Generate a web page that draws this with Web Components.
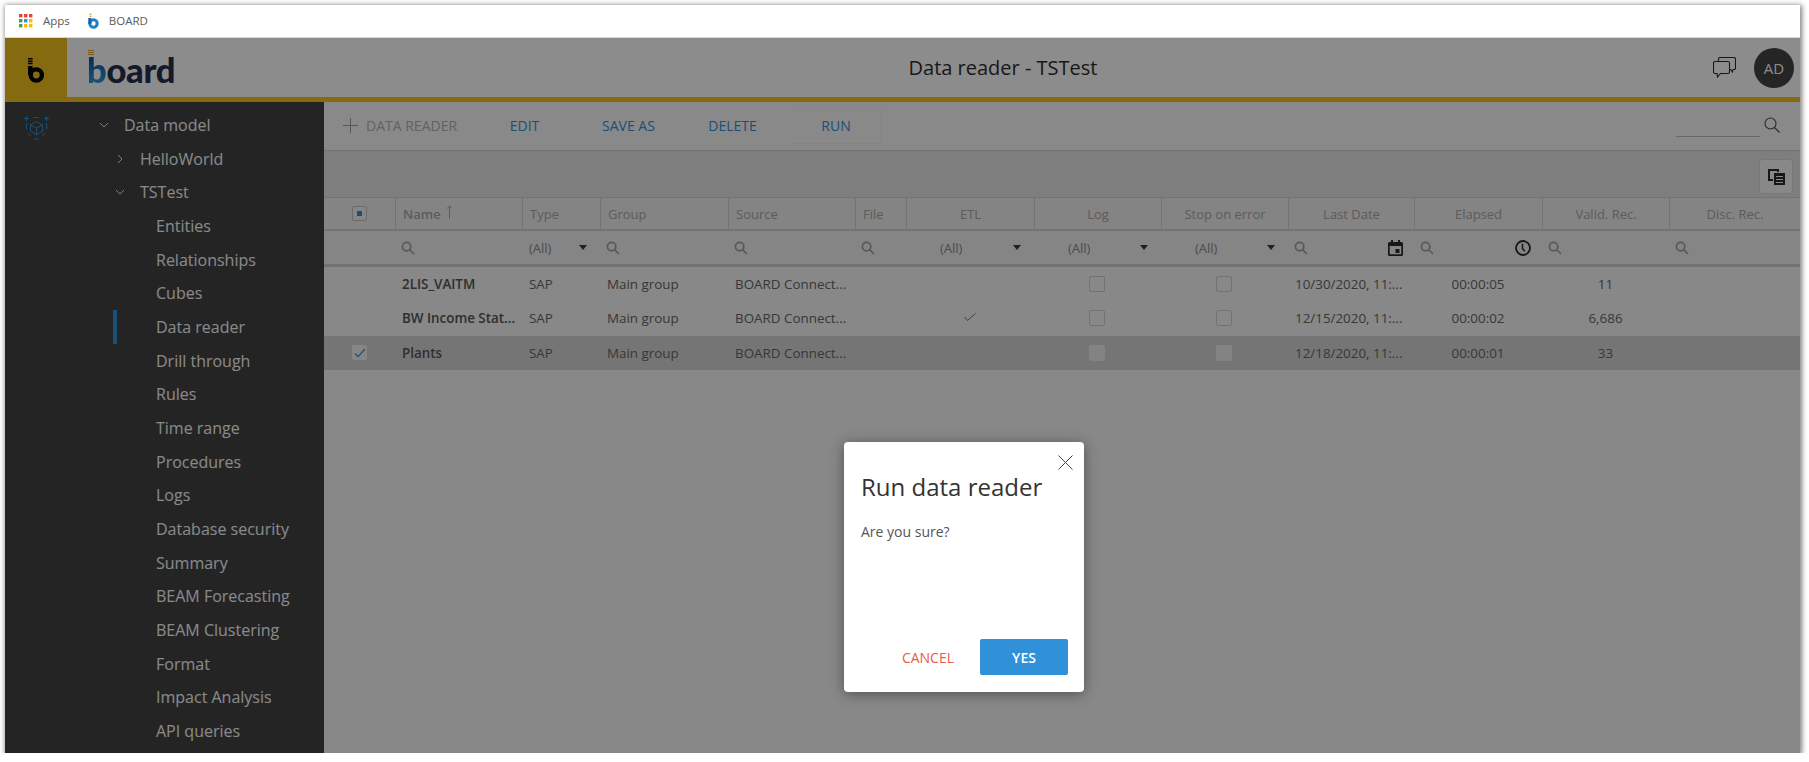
<!DOCTYPE html>
<html lang="en">
<head>
<meta charset="utf-8">
<title>Data reader - TSTest</title>
<style>
  html, body { margin: 0; padding: 0; background: #fff; overflow: hidden; }
  body { font-family: "Open Sans", "Liberation Sans", sans-serif; }
</style>
</head>
<body>
<board-app></board-app>

<script>
// small icons used in several places
const ICON_SEARCH = `<svg width="14" height="14" viewBox="0 0 14 14" fill="none" stroke="currentColor" stroke-width="1.7"><circle cx="5.6" cy="5.6" r="4.2"/><path d="M8.8 8.8l4.2 4.2"/></svg>`;
const ICON_CARET = `<svg width="8" height="5" viewBox="0 0 8 5"><path d="M0 0h8L4 5z" fill="currentColor"/></svg>`;
const ICON_CHECK = `<svg width="12" height="10" viewBox="0 0 12 10" fill="none" stroke="currentColor" stroke-width="1.2"><path d="M1 5.5l3 3.2L11 1"/></svg>`;
const ICON_TICK_THIN = `<svg width="12" height="8" viewBox="0 0 12 8" fill="none" stroke="currentColor" stroke-width=".8"><path d="M.5 4l3 3.500L11.500 .5"/></svg>`;
const ICON_CALENDAR = `<svg width="15" height="16" viewBox="0 0 15 16"><path fill="#2b2b2b" d="M3 0h2v2h5V0h2v2h1.500A1.500 1.500 0 0 1 15 3.500v11a1.500 1.500 0 0 1-1.500 1.500h-12A1.500 1.500 0 0 1 0 14.500v-11A1.500 1.500 0 0 1 1.500 2H3zM1.700 6v8.300h11.600V6z"/><rect x="7.500" y="9" width="4" height="4" fill="#2b2b2b"/></svg>`;
const ICON_CLOCK = `<svg width="16" height="16" viewBox="0 0 16 16" fill="none" stroke="#2b2b2b" stroke-width="1.800"><circle cx="8" cy="8" r="7"/><path d="M7.500 3.800v4.600l2.300 2.800" stroke-width="1.500"/></svg>`;

class BoardApp extends HTMLElement {
  constructor() {
    super();
    this.attachShadow({ mode: "open" });
  }
  connectedCallback() {
    this.shadowRoot.innerHTML = `
      <style>
        :host {
          display: flex;
          flex-direction: column;
          width: 1795px;
          height: 748px;
          margin: 5px 0 0 5px;
          background: #fff;
          box-shadow: 1px 1px 5px 1px rgba(0,0,0,.5);
          font-family: "Open Sans", "Liberation Sans", sans-serif;
        }
        .screen { position: relative; flex: 1; display: flex; flex-direction: column; min-height: 0; overflow: hidden; }
        .main { flex: 1; display: flex; min-height: 0; }
        .work { flex: 1; display: flex; flex-direction: column; background: #f7f7f7; min-width: 0; }
        .backdrop { position: absolute; inset: 0; background: rgba(0,0,0,.45); }
      </style>
      <bookmark-bar></bookmark-bar>
      <div class="screen">
        <board-header></board-header>
        <div class="main">
          <board-sidebar>
            <nav-item level="0" chevron="down">Data model</nav-item>
            <nav-item level="1" chevron="right">HelloWorld</nav-item>
            <nav-item level="1" chevron="down">TSTest</nav-item>
            <nav-item level="2">Entities</nav-item>
            <nav-item level="2">Relationships</nav-item>
            <nav-item level="2">Cubes</nav-item>
            <nav-item level="2" active>Data reader</nav-item>
            <nav-item level="2">Drill through</nav-item>
            <nav-item level="2">Rules</nav-item>
            <nav-item level="2">Time range</nav-item>
            <nav-item level="2">Procedures</nav-item>
            <nav-item level="2">Logs</nav-item>
            <nav-item level="2">Database security</nav-item>
            <nav-item level="2">Summary</nav-item>
            <nav-item level="2">BEAM Forecasting</nav-item>
            <nav-item level="2">BEAM Clustering</nav-item>
            <nav-item level="2">Format</nav-item>
            <nav-item level="2">Impact Analysis</nav-item>
            <nav-item level="2">API queries</nav-item>
          </board-sidebar>
          <div class="work">
            <data-toolbar></data-toolbar>
            <data-band></data-band>
            <data-grid></data-grid>
          </div>
        </div>
        <div class="backdrop"></div>
        <confirm-dialog heading="Run data reader">Are you sure?</confirm-dialog>
      </div>
    `;
  }
}

class BookmarkBar extends HTMLElement {
  constructor() {
    super();
    this.attachShadow({ mode: "open" });
  }
  connectedCallback() {
    const colors = ["#ea4335","#ea4335","#ea4335","#34a853","#4285f4","#fbbc05","#34a853","#fbbc05","#fbbc05"];
    const dots = colors.map((c, i) =>
      `<rect x="${(i % 3) * 5}" y="${Math.floor(i / 3) * 5}" width="3.400" height="3.400" fill="${c}"/>`).join("");
    this.shadowRoot.innerHTML = `
      <style>
        :host {
          display: flex;
          align-items: center;
          height: 33px;
          box-sizing: border-box;
          padding: 0 0 1px 14px;
          background: #fff;
          border-bottom: 1px solid #d8d8d8;
          font-size: 11.500px;
          color: #5a5a5a;
          flex: none;
        }
        svg { display: block; }
        .apps { margin-right: 10px; }
        .fav { margin: 0 10px 0 18px; }
      </style>
      <svg class="apps" width="14" height="14" viewBox="0 0 14 14">${dots}</svg>
      <span>Apps</span>
      <svg class="fav" width="11" height="16" viewBox="0 0 11 16" fill="none">
        <path d="M1.500 0h2M1.500 1.700h2M1.500 3.400h2" stroke="#e0a030" stroke-width="1"/>
        <circle cx="5.500" cy="10.500" r="3.700" stroke="#1e7fd0" stroke-width="3"/>
        <path d="M1.800 5v6" stroke="#1a5fb0" stroke-width="3"/>
      </svg>
      <span>BOARD</span>
    `;
  }
}

class BoardHeader extends HTMLElement {
  constructor() {
    super();
    this.attachShadow({ mode: "open" });
  }
  connectedCallback() {
    this.shadowRoot.innerHTML = `
      <style>
        :host {
          display: flex;
          align-items: center;
          height: 64px;
          box-sizing: border-box;
          background: #fff;
          border-bottom: 5px solid #f2c11d;
          flex: none;
        }
        .square {
          width: 62px;
          height: 64px;
          margin-bottom: -5px;
          background: #f2c11d;
          display: flex;
          align-items: center;
          justify-content: center;
          flex: none;
        }
        .word {
          position: relative;
          margin: 5px 0 0 20px;
          width: 120px;
          font: 900 34.500px/40px Lato, "Open Sans", sans-serif;
          letter-spacing: -.3px;
          color: #26304e;
          flex: none;
        }
        .word b {
          font-weight: inherit;
          background: linear-gradient(180deg, #1a5aa8 30%, #2fb0e0 100%);
          -webkit-background-clip: text;
          background-clip: text;
          color: transparent;
        }
        .ticks { position: absolute; left: 1px; top: 0; width: 6px; height: 6px; background: repeating-linear-gradient(#e0a030 0 1px, transparent 1px 2px); }
        h1 {
          flex: 1;
          margin: 0;
          text-align: center;
          font-size: 20px;
          font-weight: 400;
          color: #2e2e2e;
          padding-left: 86px;
        }
        .chat { margin-right: 18px; flex: none; display: block; }
        .avatar {
          width: 40px;
          height: 40px;
          border-radius: 50%;
          background: #444;
          color: #fdfdfd;
          font-size: 15px;
          display: flex;
          align-items: center;
          justify-content: center;
          margin-right: 6px;
          flex: none;
        }
      </style>
      <div class="square">
        <svg width="16" height="25" viewBox="0 0 16 25" fill="none" stroke="#000">
          <path d="M0 .800h4.600M0 3.200h4.600M0 5.600h4.600" stroke-width="1.500"/>
          <path d="M2.300 8v9" stroke-width="4.600"/>
          <circle cx="8.300" cy="17" r="5.600" stroke-width="4.400"/>
        </svg>
      </div>
      <div class="word"><span class="ticks"></span><b>b</b>oard</div>
      <h1>Data reader - TSTest</h1>
      <svg class="chat" width="23" height="21" viewBox="0 0 23 21" fill="none" stroke="#2b2b2b" stroke-width="1.100">
        <path d="M5.500 4V2a1.500 1.500 0 0 1 1.500-1.500h14A1.500 1.500 0 0 1 22.500 2v9a1.500 1.500 0 0 1-1.500 1.500h-1l-.5 2.500-2-2.500h-1"/>
        <path d="M2 4.500h13A1.500 1.500 0 0 1 16.500 6v9a1.500 1.500 0 0 1-1.500 1.500H7.500l-3 3.500-.5-3.500H2A1.500 1.500 0 0 1 .5 15V6A1.500 1.500 0 0 1 2 4.500z"/>
      </svg>
      <div class="avatar">AD</div>
    `;
  }
}

class BoardSidebar extends HTMLElement {
  constructor() {
    super();
    this.attachShadow({ mode: "open" });
  }
  connectedCallback() {
    this.shadowRoot.innerHTML = `
      <style>
        :host {
          display: flex;
          width: 319px;
          flex: none;
          background: #434343;
          overflow: hidden;
        }
        .rail { width: 95px; flex: none; padding: 13px 0 0 19px; box-sizing: border-box; }
        .tree { flex: 1; padding-top: 6px; }
        svg { display: block; }
      </style>
      <div class="rail">
        <svg width="25" height="25" viewBox="0 0 25 25" fill="none" stroke="#3091d8" stroke-width="1">
          <path d="M12.500 6.500l6 3.400v6.400l-6 3.400-6-3.400V9.900zM6.500 9.900l6 3.300 6-3.300M12.500 13.200v6.400"/>
          <path d="M0 3.500h5M2.500 1v5M20 3.500h5M22.500 1v5M9 2.500h6" />
          <path d="M3 8a11 11 0 0 0-.5 6M22.200 8a11 11 0 0 1 .4 6M4 18l2.500 3M21 18l-2.500 3M10 24h5" />
        </svg>
      </div>
      <div class="tree"><slot></slot></div>
    `;
  }
}

class NavItem extends HTMLElement {
  constructor() {
    super();
    this.attachShadow({ mode: "open" });
  }
  connectedCallback() {
    const level = Number(this.getAttribute("level") || 0);
    const chevron = this.getAttribute("chevron");
    let mark = "";
    if (chevron === "down") mark = `<path d="M0 0l4 4 4-4"/>`;
    if (chevron === "right") mark = `<path d="M2 -2l4 4-4 4"/>`;
    this.shadowRoot.innerHTML = `
      <style>
        :host {
          display: flex;
          align-items: center;
          position: relative;
          height: 33.680px;
          padding-left: ${level * 16}px;
          font-size: 16px;
          color: #fafafa;
          white-space: nowrap;
        }
        :host([active])::before {
          content: "";
          position: absolute;
          left: 13px;
          top: 0;
          width: 4px;
          height: 100%;
          background: #3091d8;
        }
        .chev { width: 24px; flex: none; display: block; }
      </style>
      <svg class="chev" width="24" height="10" viewBox="0 -3 24 10" fill="none" stroke="#e8e8e8" stroke-width="1">${mark}</svg>
      <slot></slot>
    `;
  }
}

class DataToolbar extends HTMLElement {
  constructor() {
    super();
    this.attachShadow({ mode: "open" });
  }
  connectedCallback() {
    this.shadowRoot.innerHTML = `
      <style>
        :host {
          display: flex;
          align-items: center;
          height: 49px;
          box-sizing: border-box;
          padding-bottom: 2px;
          background: #f9f9f9;
          border-bottom: 1px solid #cfcfcf;
          font-size: 14px;
          color: #3091d8;
          flex: none;
        }
        .add { display: flex; align-items: center; gap: 8px; width: 148.500px; padding-left: 19px; box-sizing: border-box; color: #b4b4b4; }
        .btn { width: 104px; text-align: center; }
        .run {
          width: 88px;
          margin-left: 8px;
          height: 37px;
          line-height: 35px;
          box-sizing: border-box;
          text-align: center;
          border: 1px solid #f4f4f4;
          border-left: 0;
          border-bottom-color: #e8f0f6;
        }
        .find { margin-left: auto; display: flex; align-items: flex-start; margin-right: 20px; color: #4a4a4a; }
        .line { width: 84px; height: 21px; border-bottom: 1px solid #bdbdbd; margin-top: 2px; }
        svg { display: block; }
        .glass { margin: 4px 0 0 4px; }
      </style>
      <div class="add">
        <svg width="15" height="15" viewBox="0 0 15 15" stroke="#a0a0a0" stroke-width="1"><path d="M7.500 0v15M0 7.500h15"/></svg>
        <span>DATA READER</span>
      </div>
      <div class="btn">EDIT</div>
      <div class="btn">SAVE AS</div>
      <div class="btn">DELETE</div>
      <div class="run">RUN</div>
      <div class="find">
        <div class="line"></div>
        <svg class="glass" width="16" height="16" viewBox="0 0 16 16" fill="none" stroke="currentColor" stroke-width="1.100"><circle cx="6.500" cy="6.500" r="5.500"/><path d="M10.500 10.500l5 5"/></svg>
      </div>
    `;
  }
}

class DataBand extends HTMLElement {
  constructor() {
    super();
    this.attachShadow({ mode: "open" });
  }
  connectedCallback() {
    this.shadowRoot.innerHTML = `
      <style>
        :host {
          display: flex;
          justify-content: flex-end;
          align-items: center;
          height: 46px;
          box-sizing: border-box;
          padding: 5px 7px 0 0;
          background: #e6e6e6;
          flex: none;
        }
        .panel {
          width: 34px;
          height: 35px;
          box-sizing: border-box;
          background: #f7f7f7;
          border: 1px solid #d9d9d9;
          border-radius: 3px;
          display: flex;
          align-items: center;
          justify-content: center;
        }
      </style>
      <div class="panel">
        <svg width="17" height="16" viewBox="0 0 17 16" fill="#2b2b2b">
          <path d="M0 0h11v3H9V2H2v8h3v2H0z"/>
          <path d="M6 4h11v12H6zM8 7v1h7V7zm0 3v1h7v-1zm0 3v1h7v-1z" fill-rule="evenodd"/>
        </svg>
      </div>
    `;
  }
}

class DataGrid extends HTMLElement {
  constructor() {
    super();
    this.attachShadow({ mode: "open" });
  }
  connectedCallback() {
    const heads = [
      ["", ""], ["Name", "left"], ["Type", "left"], ["Group", "left"], ["Source", "left"], ["File", "left"],
      ["ETL", "mid"], ["Log", "mid"], ["Stop on error", "mid"], ["Last Date", "mid"],
      ["Elapsed", "mid"], ["Valid. Rec.", "mid"], ["Disc. Rec.", "mid"]
    ];
    const rows = [
      { name: "2LIS_VAITM", etl: false, date: "10/30/2020, 11:...", time: "00:00:05", valid: "11" },
      { name: "BW Income Stat...", etl: true, date: "12/15/2020, 11:...", time: "00:00:02", valid: "6,686" },
      { name: "Plants", etl: false, date: "12/18/2020, 11:...", time: "00:00:01", valid: "33", on: true }
    ];
    const search = `<span class="q">${ICON_SEARCH}</span>`;
    const pick = (cls) => `<div class="c pick ${cls}"><span>(All)</span><span class="caret">${ICON_CARET}</span></div>`;
    const headHtml = heads.map(([t, k], i) => {
      if (i === 0) return `<div class="c mid nob"><span class="box master"><i></i></span></div>`;
      const arrow = t === "Name" ? `<svg class="sort" width="7" height="14" viewBox="0 0 7 14" fill="none" stroke="#a8a8a8" stroke-width="1"><path d="M3.500 14V1M1 3.500L3.500 1 6 3.500"/></svg>` : "";
      return `<div class="c ${k}">${t === "Name" ? `<b class="hn">${t}</b>` : t}${arrow}</div>`;
    }).join("");
    const filterHtml = `
      <div class="c"></div>
      <div class="c">${search}</div>${pick("")}
      <div class="c">${search}</div><div class="c">${search}</div><div class="c">${search}</div>
      ${pick("wide")}${pick("wide")}${pick("wide")}
      <div class="c between">${search}${ICON_CALENDAR}</div>
      <div class="c between">${search}${ICON_CLOCK}</div>
      <div class="c">${search}</div><div class="c">${search}</div>`;
    const rowHtml = rows.map(r => `
      <div class="row ${r.on ? "on" : ""}">
        <div class="c mid">${r.on ? `<span class="box tick">${ICON_CHECK}</span>` : ""}</div>
        <div class="c strong">${r.name}</div>
        <div class="c">SAP</div>
        <div class="c">Main group</div>
        <div class="c">BOARD Connect...</div>
        <div class="c"></div>
        <div class="c mid thin">${r.etl ? ICON_TICK_THIN : ""}</div>
        <div class="c mid"><span class="box plain"></span></div>
        <div class="c mid"><span class="box plain"></span></div>
        <div class="c">${r.date}</div>
        <div class="c mid">${r.time}</div>
        <div class="c mid">${r.valid}</div>
        <div class="c"></div>
      </div>`).join("");
    this.shadowRoot.innerHTML = `
      <style>
        :host {
          --cols: 71px 127px 78px 128px 127px 51px 128px 127px 127px 126px 128px 127px 131px;
          display: block;
          flex: 1;
          font-size: 13.400px;
          color: #666;
        }
        .row { display: grid; grid-template-columns: var(--cols); align-items: stretch; height: 34.300px; }
        .head { height: 34px; background: #f0f0f0; border-top: 1px solid #d4d4d4; border-bottom: 2px solid #d4d4d4; box-sizing: border-box; color: #a8a8a8; font-size: 13px; }
        .filter { height: 36px; background: #f2f2f2; border-bottom: 3px solid #cfcfcf; box-sizing: border-box; color: #8a8a8a; font-size: 13px; }
        .c { display: flex; align-items: center; padding: 0 7px; box-sizing: border-box; white-space: nowrap; overflow: hidden; min-width: 0; }
        .head .c { border-left: 1px solid #d4d4d4; }
        .head .nob { border-left: 0; }
        .hn { font-weight: 600; }
        .sort { margin-left: 5px; margin-bottom: 3px; }
        .mid { justify-content: center; }
        .pick { justify-content: space-between; padding-right: 13px; }
        .pick.wide { padding-left: 34px; }
        .caret { color: #3a3a3a; display: flex; }
        .between { justify-content: space-between; padding-right: 11px; }
        .q { display: flex; color: #a0a0a0; margin-left: -1px; }
        .strong { font-weight: 600; color: #555; }
        .row.on { background: #d6d6d6; }
        .box { display: inline-flex; align-items: center; justify-content: center; box-sizing: border-box; width: 16px; height: 16px; border-radius: 2px; }
        .master { width: 15px; height: 15px; border: 1px solid #c4c4c4; background: #f4f4f4; }
        .master i { width: 5px; height: 5px; background: #3091d8; display: block; }
        .plain { border: 1px solid #d0d0d0; background: #f7f7f7; margin-left: -1px; }
        .on .plain { border-color: #efefef; background: #efefef; }
        .tick { width: 15px; height: 15px; background: #f4f4f4; color: #3091d8; }
        .thin { color: #555; padding-bottom: 3px; }
      </style>
      <div class="row head">${headHtml}</div>
      <div class="row filter">${filterHtml}</div>
      ${rowHtml}
    `;
  }
}

class ConfirmDialog extends HTMLElement {
  constructor() {
    super();
    this.attachShadow({ mode: "open" });
  }
  connectedCallback() {
    this.shadowRoot.innerHTML = `
      <style>
        :host {
          position: absolute;
          left: 839px;
          top: 404px;
          width: 240px;
          height: 250px;
          box-sizing: border-box;
          padding: 29px 16px 17px 17px;
          background: #fff;
          border-radius: 4px;
          box-shadow: 0 2px 14px rgba(0,0,0,.4);
          display: flex;
          flex-direction: column;
        }
        .close { position: absolute; right: 11px; top: 13px; display: block; }
        h2 { margin: 0; font-size: 24px; line-height: 32px; font-weight: 400; color: #333; white-space: nowrap; }
        p { margin: 20px 0 0; font-size: 14px; line-height: 18px; color: #555; flex: 1; }
        .actions { display: flex; justify-content: flex-end; align-items: center; gap: 26px; }
        .cancel { font-size: 14px; color: #e85c48; }
        .yes {
          width: 88px;
          height: 36px;
          border-radius: 2px;
          background: #3091d8;
          color: #fff;
          font-size: 14px;
          font-weight: 600;
          display: flex;
          align-items: center;
          justify-content: center;
        }
      </style>
      <svg class="close" width="15" height="15" viewBox="0 0 15 15" stroke="#444" stroke-width="1"><path d="M.5.500l14 14M14.500.500l-14 14"/></svg>
      <h2>${this.getAttribute("heading")}</h2>
      <p><slot></slot></p>
      <div class="actions">
        <span class="cancel">CANCEL</span>
        <span class="yes">YES</span>
      </div>
    `;
  }
}

customElements.define("nav-item", NavItem);
customElements.define("bookmark-bar", BookmarkBar);
customElements.define("board-header", BoardHeader);
customElements.define("board-sidebar", BoardSidebar);
customElements.define("data-toolbar", DataToolbar);
customElements.define("data-band", DataBand);
customElements.define("data-grid", DataGrid);
customElements.define("confirm-dialog", ConfirmDialog);
customElements.define("board-app", BoardApp);
</script>
</body>
</html>
